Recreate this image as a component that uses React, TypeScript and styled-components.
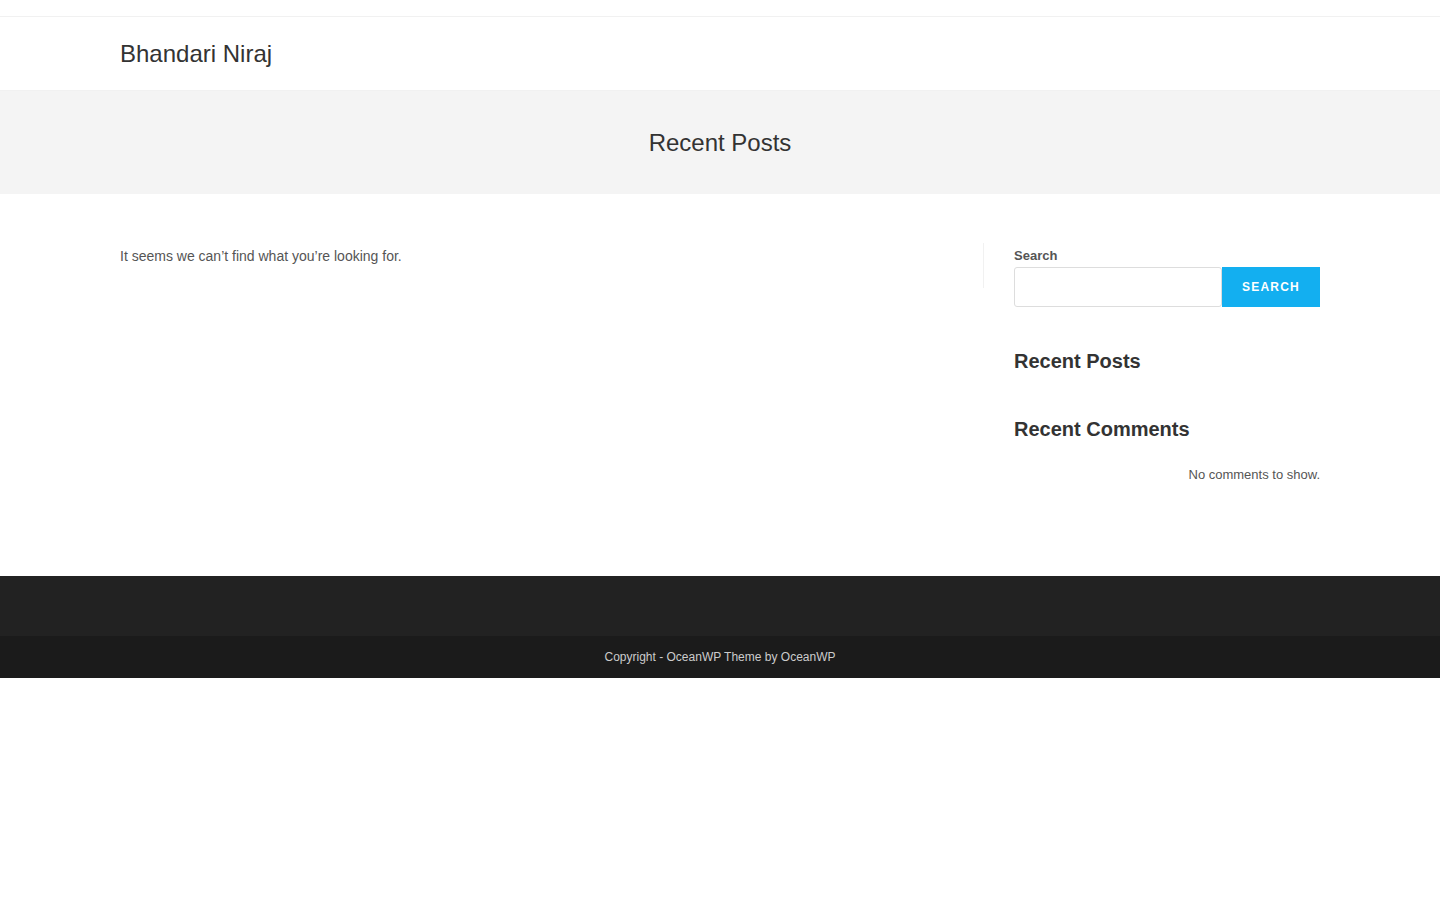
import React from 'react'
import styled, { createGlobalStyle } from 'styled-components'

const GlobalStyle = createGlobalStyle`
  * {
    box-sizing: border-box;
  }

  body {
    margin: 0;
    background: #fff;
    font-family: 'Liberation Sans', Arial, Helvetica, sans-serif;
    color: #555;
    font-size: 14px;
    line-height: 1.8;
  }
`

const Container = styled.div`
  width: 1200px;
  margin: 0 auto;
`

const TopBar = styled.div`
  height: 17px;
  border-bottom: 1px solid #f1f1f1;
`

const Header = styled.header`
  height: 74px;
  border-bottom: 1px solid #f1f1f1;
`

const HeaderInner = styled(Container)`
  display: flex;
  align-items: center;
  height: 100%;
  padding-top: 1px;
`

const SiteTitle = styled.a`
  font-size: 24px;
  line-height: 1;
  color: #333;
  text-decoration: none;
`

const PageHeader = styled.section`
  background: #f4f4f4;
  height: 103px;
  display: flex;
  align-items: center;
  justify-content: center;
`

const PageTitle = styled.h1`
  margin: 0;
  font-size: 24px;
  font-weight: 400;
  line-height: 1.4;
  color: #333;
`

const Main = styled(Container)`
  display: grid;
  grid-template-columns: 864px 336px;
  padding: 50px 0 90px;
`

const Content = styled.div`
  padding-right: 30px;
`

const Notice = styled.p`
  margin: 0;
  font-size: 14px;
  line-height: 25px;
  color: #555;
`

const Sidebar = styled.aside`
  position: relative;
  padding-left: 30px;

  &::before {
    content: '';
    position: absolute;
    left: -1px;
    top: -1px;
    width: 1px;
    height: 45px;
    background: #f1f1f1;
  }
`

const Widget = styled.div`
  margin-bottom: 40px;

  &:last-child {
    margin-bottom: 0;
  }
`

const SearchLabel = styled.label`
  display: block;
  font-size: 13px;
  font-weight: 700;
  line-height: 22px;
  margin-top: 1px;
  color: #555;
`

const SearchRow = styled.div`
  display: flex;
`

const SearchInput = styled.input`
  flex: 1;
  height: 40px;
  border: 1px solid #ddd;
  border-radius: 3px;
  padding: 6px 12px;
  font-family: inherit;
  font-size: 14px;
  outline: none;
  background: #fff;
`

const SearchButton = styled.button`
  width: 98px;
  height: 40px;
  border: 0;
  background: #13aff0;
  color: #fff;
  font-family: inherit;
  font-size: 12px;
  font-weight: 700;
  letter-spacing: 0.1em;
  text-transform: uppercase;
  cursor: pointer;
`

const WidgetTitle = styled.h2<{ $gap?: number }>`
  margin: 0 0 ${({ $gap }) => $gap ?? 0}px;
  font-size: 20px;
  font-weight: 700;
  line-height: 28px;
  color: #333;
`

const EmptyText = styled.div`
  font-size: 13px;
  line-height: 23px;
  text-align: right;
  color: #555;
`

const FooterWidgets = styled.div`
  height: 60px;
  background: #222;
`

const FooterBottom = styled.footer`
  height: 42px;
  background: #1b1b1b;
  display: flex;
  align-items: center;
  justify-content: center;
`

const Copyright = styled.span`
  font-size: 12px;
  line-height: 1;
  color: #ccc;
`

export default function App() {
  return (
    <>
      <GlobalStyle />
      <TopBar />
      <Header>
        <HeaderInner>
          <SiteTitle href="#">Bhandari Niraj</SiteTitle>
        </HeaderInner>
      </Header>
      <PageHeader>
        <PageTitle>Recent Posts</PageTitle>
      </PageHeader>
      <Main>
        <Content>
          <Notice>It seems we can’t find what you’re looking for.</Notice>
        </Content>
        <Sidebar>
          <Widget>
            <SearchLabel htmlFor="search">Search</SearchLabel>
            <SearchRow>
              <SearchInput id="search" type="text" />
              <SearchButton>Search</SearchButton>
            </SearchRow>
          </Widget>
          <Widget>
            <WidgetTitle>Recent Posts</WidgetTitle>
          </Widget>
          <Widget>
            <WidgetTitle $gap={20}>Recent Comments</WidgetTitle>
            <EmptyText>No comments to show.</EmptyText>
          </Widget>
        </Sidebar>
      </Main>
      <FooterWidgets />
      <FooterBottom>
        <Copyright>Copyright - OceanWP Theme by OceanWP</Copyright>
      </FooterBottom>
    </>
  )
}
